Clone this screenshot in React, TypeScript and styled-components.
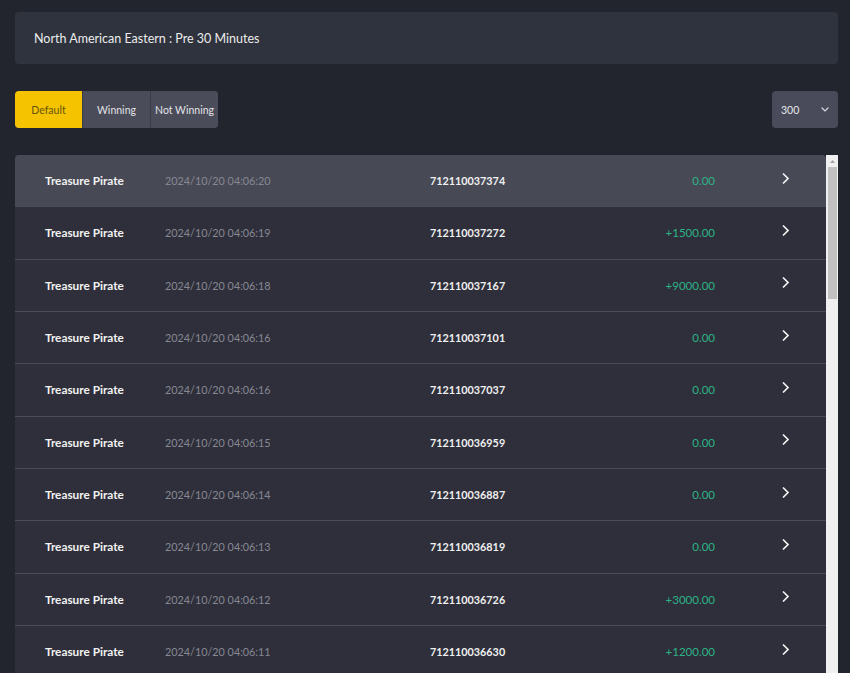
import styled, { createGlobalStyle } from 'styled-components';

const GlobalStyle = createGlobalStyle`
  html, body {
    margin: 0;
    padding: 0;
    background: #23252e;
    overflow: hidden;
  }
  body {
    font-family: Lato, "Noto Sans", Arial, sans-serif;
    color: #e6e6e6;
  }
`;

interface Bet {
  game: string;
  time: string;
  id: string;
  amount: number;
}

const bets: Bet[] = [
  { game: 'Treasure Pirate', time: '2024/10/20 04:06:20', id: '712110037374', amount: 0 },
  { game: 'Treasure Pirate', time: '2024/10/20 04:06:19', id: '712110037272', amount: 1500 },
  { game: 'Treasure Pirate', time: '2024/10/20 04:06:18', id: '712110037167', amount: 9000 },
  { game: 'Treasure Pirate', time: '2024/10/20 04:06:16', id: '712110037101', amount: 0 },
  { game: 'Treasure Pirate', time: '2024/10/20 04:06:16', id: '712110037037', amount: 0 },
  { game: 'Treasure Pirate', time: '2024/10/20 04:06:15', id: '712110036959', amount: 0 },
  { game: 'Treasure Pirate', time: '2024/10/20 04:06:14', id: '712110036887', amount: 0 },
  { game: 'Treasure Pirate', time: '2024/10/20 04:06:13', id: '712110036819', amount: 0 },
  { game: 'Treasure Pirate', time: '2024/10/20 04:06:12', id: '712110036726', amount: 3000 },
  { game: 'Treasure Pirate', time: '2024/10/20 04:06:11', id: '712110036630', amount: 1200 },
];

function formatAmount(n: number) {
  return n > 0 ? `+${n.toFixed(2)}` : n.toFixed(2);
}

const Page = styled.div`
  padding: 12px 12px 0 15px;
`;

const TitleBar = styled.div`
  height: 52px;
  display: flex;
  align-items: center;
  padding: 0 19px;
  background: #2f333d;
  border-radius: 4px;
  font-size: 12.5px;
  color: #ececec;
`;

const Toolbar = styled.div`
  display: flex;
  justify-content: space-between;
  align-items: center;
  margin: 27px 0;
`;

const Tabs = styled.div`
  display: flex;
  gap: 1px;
  background: #3a3c47;
  border-radius: 4px;
  overflow: hidden;
`;

const Tab = styled.button<{ $active?: boolean }>`
  width: 67px;
  height: 37px;
  border: 0;
  padding: 0;
  font-family: inherit;
  font-size: 10.5px;
  background: ${(p) => (p.$active ? '#f5c300' : '#4a4c5a')};
  color: ${(p) => (p.$active ? '#66540c' : '#e2e2e6')};
  cursor: pointer;
`;

const Select = styled.div`
  width: 66px;
  height: 37px;
  box-sizing: border-box;
  display: flex;
  align-items: center;
  justify-content: space-between;
  padding: 0 9px;
  background: #4a4b5a;
  border-radius: 4px;
  font-size: 10.5px;
  color: #e6e6ea;
`;

const ListFrame = styled.div`
  display: flex;
  height: calc(100vh - 155px);
  overflow: hidden;
`;

const List = styled.div`
  flex: 1;
  overflow: hidden;
  border-radius: 4px 4px 0 0;
`;

const ScrollTrack = styled.div`
  width: 12px;
  display: flex;
  flex-direction: column;
  align-items: center;
  background: #f0f0f0;
`;

const ScrollArrow = styled.div`
  height: 12px;
  display: flex;
  align-items: center;
  justify-content: center;
`;

const ScrollThumb = styled.div`
  width: 9px;
  height: 132px;
  margin-left: 1px;
  background: #c1c1c1;
`;

const Row = styled.div<{ $hover?: boolean }>`
  display: grid;
  grid-template-columns: 120px 265px 160px 125px 75px;
  align-items: center;
  height: 51.33px;
  padding-left: 30px;
  background: ${(p) => (p.$hover ? '#474955' : '#2e2f3a')};
  border-bottom: 1px solid #4a4c57;
  font-size: 10.8px;
`;

const Game = styled.div`
  font-size: 11.8px;
  font-weight: 700;
  color: #f2f2f2;
`;

const Time = styled.div`
  color: #878893;
`;

const BetId = styled.div`
  font-weight: 700;
  color: #f0f0f0;
`;

const Amount = styled.div`
  text-align: right;
  font-size: 11.5px;
  color: #2db386;
`;

const Arrow = styled.div`
  display: flex;
  justify-content: flex-end;
  margin-bottom: 5px;
`;

function ChevronRight() {
  return (
    <svg width="8" height="11" viewBox="0 0 8 11" fill="none">
      <path d="M1.5 1 L6 5.5 L1.5 10" stroke="#f4f4f4" strokeWidth="1.7" strokeLinecap="round" />
    </svg>
  );
}

function ChevronDown() {
  return (
    <svg width="8" height="5" viewBox="0 0 8 5" fill="none">
      <path d="M1 1 L4 4 L7 1" stroke="#d8d8de" strokeWidth="1.2" strokeLinecap="round" />
    </svg>
  );
}

function TriangleUp() {
  return (
    <svg width="5" height="3" viewBox="0 0 5 3">
      <path d="M0 3 L2.5 0 L5 3 Z" fill="#a3a3a3" />
    </svg>
  );
}

export default function App() {
  return (
    <>
      <GlobalStyle />
      <Page>
        <TitleBar>North American Eastern : Pre 30 Minutes</TitleBar>
        <Toolbar>
          <Tabs>
            <Tab $active>Default</Tab>
            <Tab>Winning</Tab>
            <Tab>Not Winning</Tab>
          </Tabs>
          <Select>
            <span>300</span>
            <ChevronDown />
          </Select>
        </Toolbar>
        <ListFrame>
          <List>
            {bets.map((bet, i) => (
              <Row key={bet.id} $hover={i === 0}>
                <Game>{bet.game}</Game>
                <Time>{bet.time}</Time>
                <BetId>{bet.id}</BetId>
                <Amount>{formatAmount(bet.amount)}</Amount>
                <Arrow>
                  <ChevronRight />
                </Arrow>
              </Row>
            ))}
          </List>
          <ScrollTrack>
            <ScrollArrow>
              <TriangleUp />
            </ScrollArrow>
            <ScrollThumb />
          </ScrollTrack>
        </ListFrame>
      </Page>
    </>
  );
}
